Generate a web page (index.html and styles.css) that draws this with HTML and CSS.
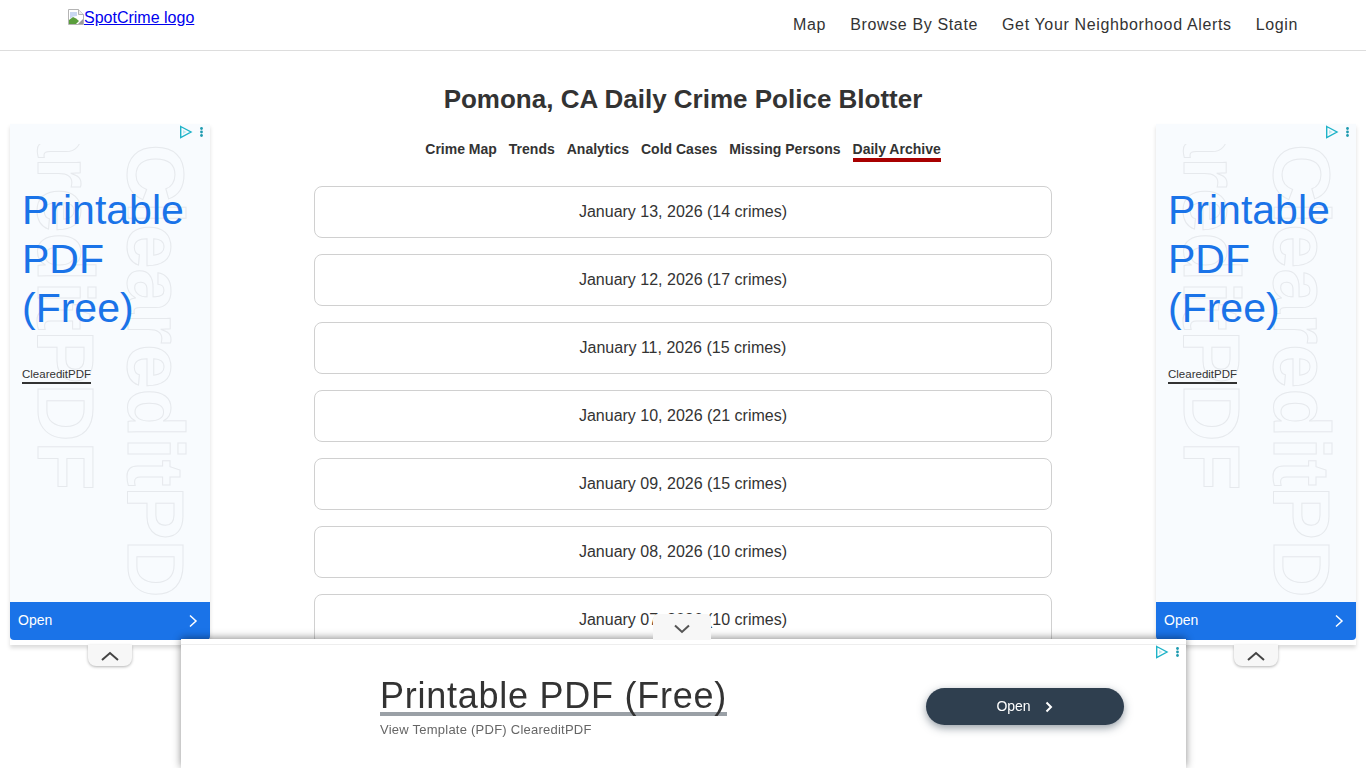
FILE: index.html
```html
<!DOCTYPE html>
<html lang="en">
  <head>
    <meta charset="UTF-8" />
    <meta name="viewport" content="width=device-width, initial-scale=1.0" />
    <title>Pomona, CA Daily Crime Police Blotter</title>
    <link rel="stylesheet" href="styles.css">
  </head>
  <body>
    <header class="topbar">
      <a class="logo" href="#">
        <svg class="broken" width="16" height="16" viewBox="0 0 16 16">
          <path d="M0.5 0.5H10.5L15.5 5.5V15.5H0.5Z" fill="#fff" stroke="#b4b4b4" />
          <path d="M10.5 0.5V5.5H15.5" fill="#eee" stroke="#b4b4b4" />
          <path d="M1 15V11L5 8L8 9.5L11 12L8 15Z" fill="#5a9e3c" />
          <path d="M2 3H9V7L5 7.5L2 10Z" fill="#c9d7f2" />
          <path d="M10 15L15 10V15Z" fill="#9a9a9a" />
        </svg>SpotCrime logo</a>
      <nav class="mainnav">
        <a href="#">Map</a>
        <a href="#">Browse By State</a>
        <a href="#">Get Your Neighborhood Alerts</a>
        <a href="#">Login</a>
      </nav>
    </header>

    <main class="content">
      <h1>Pomona, CA Daily Crime Police Blotter</h1>
      <nav class="tabs">
        <a href="#">Crime Map</a>
        <a href="#">Trends</a>
        <a href="#">Analytics</a>
        <a href="#">Cold Cases</a>
        <a href="#">Missing Persons</a>
        <a href="#" class="valgt">Daily Archive</a>
      </nav>
      <div class="days">
        <a class="day" href="#">January 13, 2026 (14 crimes)</a>
        <a class="day" href="#">January 12, 2026 (17 crimes)</a>
        <a class="day" href="#">January 11, 2026 (15 crimes)</a>
        <a class="day" href="#">January 10, 2026 (21 crimes)</a>
        <a class="day" href="#">January 09, 2026 (15 crimes)</a>
        <a class="day" href="#">January 08, 2026 (10 crimes)</a>
        <a class="day" href="#">January 07, 2026 (10 crimes)</a>
      </div>
    </main>

    <aside class="side-ad side-left">
      <div class="side-body">
        <div class="ghosts">
          <span class="ghost ghost-right">CleareditPDF</span>
          <span class="ghost ghost-left">CleareditPDF</span>
        </div>
        <svg class="ad-icons" width="26" height="14" viewBox="0 0 26 14">
          <path d="M0.7 1.5L11 7L0.7 12.5Z" fill="none" stroke="#1fb3c8" stroke-width="1.4" />
          <path d="M3 5L6.5 7L3 9Z" fill="#bfe9ef" />
          <circle cx="21.5" cy="3.5" r="1.4" fill="#1f9bb0" />
          <circle cx="21.5" cy="7" r="1.4" fill="#1f9bb0" />
          <circle cx="21.5" cy="10.5" r="1.4" fill="#1f9bb0" />
        </svg>
        <p class="side-title">Printable PDF (Free)</p>
        <span class="side-brand">CleareditPDF</span>
      </div>
      <div class="side-open">
        <span>Open</span>
        <svg width="10" height="14" viewBox="0 0 10 14"><path d="M2 1.5L8 7L2 12.5" fill="none" stroke="#fff" stroke-width="1.5" /></svg>
      </div>
      <div class="side-toggle">
        <svg width="20" height="10" viewBox="0 0 20 10"><path d="M2 9L10 2L18 9" fill="none" stroke="#444" stroke-width="2" /></svg>
      </div>
    </aside>

    <aside class="side-ad side-right">
      <div class="side-body">
        <div class="ghosts">
          <span class="ghost ghost-right">CleareditPDF</span>
          <span class="ghost ghost-left">CleareditPDF</span>
        </div>
        <svg class="ad-icons" width="26" height="14" viewBox="0 0 26 14">
          <path d="M0.7 1.5L11 7L0.7 12.5Z" fill="none" stroke="#1fb3c8" stroke-width="1.4" />
          <path d="M3 5L6.5 7L3 9Z" fill="#bfe9ef" />
          <circle cx="21.5" cy="3.5" r="1.4" fill="#1f9bb0" />
          <circle cx="21.5" cy="7" r="1.4" fill="#1f9bb0" />
          <circle cx="21.5" cy="10.5" r="1.4" fill="#1f9bb0" />
        </svg>
        <p class="side-title">Printable PDF (Free)</p>
        <span class="side-brand">CleareditPDF</span>
      </div>
      <div class="side-open">
        <span>Open</span>
        <svg width="10" height="14" viewBox="0 0 10 14"><path d="M2 1.5L8 7L2 12.5" fill="none" stroke="#fff" stroke-width="1.5" /></svg>
      </div>
      <div class="side-toggle">
        <svg width="20" height="10" viewBox="0 0 20 10"><path d="M2 9L10 2L18 9" fill="none" stroke="#444" stroke-width="2" /></svg>
      </div>
    </aside>

    <aside class="bottom-ad">
      <div class="bottom-toggle">
        <svg width="18" height="10" viewBox="0 0 18 10"><path d="M2 1.5L9 8L16 1.5" fill="none" stroke="#555" stroke-width="2" /></svg>
      </div>
      <svg class="ad-icons" width="26" height="14" viewBox="0 0 26 14">
        <path d="M0.7 1.5L11 7L0.7 12.5Z" fill="none" stroke="#1fb3c8" stroke-width="1.4" />
        <path d="M3 5L6.5 7L3 9Z" fill="#bfe9ef" />
        <circle cx="21.5" cy="3.5" r="1.4" fill="#1f9bb0" />
        <circle cx="21.5" cy="7" r="1.4" fill="#1f9bb0" />
        <circle cx="21.5" cy="10.5" r="1.4" fill="#1f9bb0" />
      </svg>
      <div class="bottom-text">
        <span class="bottom-title">Printable PDF (Free)</span>
        <span class="bottom-sub">View Template (PDF) CleareditPDF</span>
      </div>
      <div class="bottom-open">
        <span>Open</span>
        <svg width="10" height="12" viewBox="0 0 10 12"><path d="M2.5 1.5L7 6L2.5 10.5" fill="none" stroke="#fff" stroke-width="2" /></svg>
      </div>
    </aside>
  </body>
</html>
```

FILE: styles.css
```css
html {
  overflow: hidden;
}

body {
  margin: 0;
  height: 768px;
  overflow: hidden;
  font-family: "Liberation Sans", Arial, sans-serif;
  color: #333;
  background-color: #fff;
}

.topbar {
  display: flex;
  justify-content: space-between;
  height: 50px;
  padding: 0 68px;
  border-bottom: 1px solid #ddd;
}

.logo {
  display: flex;
  align-items: flex-start;
  padding-top: 9px;
  font-size: 16px;
  line-height: 18px;
  color: #0000ee;
  text-decoration: underline;
}

.broken {
  flex-shrink: 0;
}

.mainnav {
  display: flex;
  gap: 24px;
  padding-top: 15px;
}

.mainnav a {
  font-size: 16px;
  line-height: 19px;
  letter-spacing: 0.64px;
  color: #333;
  text-decoration: none;
}

.content {
  display: flex;
  flex-direction: column;
  align-items: center;
}

h1 {
  margin: 33px 0 0;
  font-size: 26px;
  line-height: 30px;
  font-weight: bold;
}

.tabs {
  display: flex;
  gap: 12px;
  margin-top: 27px;
}

.tabs a {
  padding-bottom: 3px;
  font-size: 14px;
  line-height: 16px;
  font-weight: bold;
  color: #333;
  text-decoration: none;
}

.tabs .valgt {
  border-bottom: 4px solid #a80000;
  padding-bottom: 0;
  height: 17px;
}

.days {
  display: flex;
  flex-direction: column;
  gap: 16px;
  width: 738px;
  margin-top: 24px;
}

.day {
  display: block;
  box-sizing: border-box;
  height: 52px;
  border: 1px solid #d0d0d0;
  border-radius: 8px;
  font-size: 16px;
  line-height: 50px;
  text-align: center;
  color: #333;
  text-decoration: none;
}

/* annoncer oven paa siden */
.side-ad {
  position: fixed;
  top: 124px;
  width: 200px;
  height: 521px;
  background-color: #fff;
  box-shadow: 0 3px 4px rgba(0, 0, 0, 0.14);
}

.side-left {
  left: 10px;
}

.side-right {
  left: 1156px;
}

.side-body {
  position: relative;
  height: 478px;
  overflow: hidden;
  background-color: #f8fbfe;
}

.ghosts {
  position: absolute;
  top: 20px;
  left: 0;
  right: 0;
  height: 451px;
  overflow: hidden;
}

.ghost {
  position: absolute;
  writing-mode: vertical-rl;
  font-size: 80px;
  line-height: 80px;
  font-weight: bold;
  white-space: nowrap;
  color: transparent;
  -webkit-text-stroke: 1px #e6e9ed;
}

.ghost-right {
  top: 0;
  left: 105px;
}

.ghost-left {
  bottom: 105px;
  left: 15px;
}

.ad-icons {
  position: absolute;
  top: 1px;
  right: 4px;
}

.side-title {
  position: relative;
  margin: 62px 0 0 12px;
  width: 170px;
  font-size: 41px;
  line-height: 49px;
  color: #1a73e8;
}

.side-brand {
  position: absolute;
  top: 243px;
  left: 12px;
  padding-bottom: 1px;
  border-bottom: 2px solid #333;
  font-size: 11.5px;
  line-height: 14px;
  color: #333;
}

.side-open {
  display: flex;
  justify-content: space-between;
  align-items: center;
  height: 38px;
  padding: 0 12px 0 8px;
  border-radius: 0 0 4px 4px;
  background-color: #1a73e8;
  font-size: 14px;
  color: #fff;
}

.side-open span {
  padding-bottom: 2px;
}

.side-toggle {
  position: absolute;
  top: 521px;
  left: 78px;
  display: flex;
  justify-content: center;
  align-items: center;
  width: 44px;
  height: 21px;
  border-radius: 0 0 8px 8px;
  background-color: #f7f7f7;
  box-shadow: 0 1px 3px rgba(0, 0, 0, 0.3);
}

.bottom-ad {
  position: fixed;
  top: 639px;
  left: 181px;
  width: 1005px;
  height: 129px;
  display: flex;
  align-items: flex-start;
  justify-content: space-between;
  box-sizing: border-box;
  padding: 50px 62px 0 199px;
  background-color: #fff;
  box-shadow: 0 -1px 8px rgba(0, 0, 0, 0.45);
}

.bottom-ad::before {
  content: "";
  position: absolute;
  top: 5px;
  left: 0;
  right: 0;
  border-top: 1px solid #eee;
}

.bottom-ad .ad-icons {
  top: 6px;
}

.bottom-toggle {
  position: absolute;
  top: -25px;
  left: 472px;
  display: flex;
  justify-content: center;
  align-items: center;
  box-sizing: border-box;
  width: 58px;
  height: 26px;
  padding-top: 4px;
  border-radius: 5px 5px 0 0;
  background-color: #f7f7f7;
}

.bottom-text {
  display: flex;
  flex-direction: column;
  align-items: flex-start;
}

.bottom-title {
  display: block;
  height: 23px;
  border-bottom: 4px solid #9aa0a6;
  font-size: 36px;
  line-height: 14px;
  letter-spacing: 0.75px;
  color: #333;
}

.bottom-sub {
  margin-top: 6px;
  font-size: 13px;
  line-height: 16px;
  letter-spacing: 0.24px;
  color: #666;
}

.bottom-open {
  display: flex;
  justify-content: center;
  align-items: center;
  gap: 13px;
  width: 198px;
  height: 37px;
  margin-top: -1px;
  border-radius: 19px;
  background-color: #2f3f4f;
  box-shadow: 0 3px 8px rgba(47, 63, 79, 0.5);
  font-size: 14px;
  color: #fff;
}

.bottom-open span {
  padding-bottom: 2px;
}
```
